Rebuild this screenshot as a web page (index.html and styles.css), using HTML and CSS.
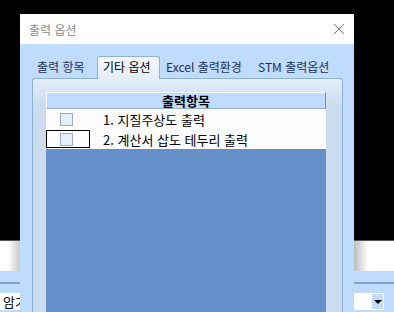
FILE: index.html
```html
<!DOCTYPE html>
<html lang="ko">
<head>
	<meta charset="utf-8">
	<title>출력 옵션</title>
	<link rel="stylesheet" href="styles.css">
</head>
<body>
	<div class="desk">
		<div class="desk-black"></div>
		<div class="desk-strip"></div>
		<div class="desk-band"></div>
		<div class="desk-rule"></div>
		<div class="desk-band2"></div>
		<div class="combo-row">
			<div class="combo combo-left">암기</div>
			<div class="combo combo-right"><span class="combo-btn"><i></i></span></div>
		</div>
	</div>

	<div class="dialog">
		<div class="titlebar">
			<span class="title">출력 옵션</span>
			<svg class="close" width="12" height="12" viewBox="0 0 12 12">
				<path d="M1 1 L11 11 M11 1 L1 11" stroke="#7b7b7b" stroke-width="1" fill="none"/>
			</svg>
		</div>
		<div class="dlg-body">
			<div class="tabs">
				<span class="tab tab1">출력 항목</span>
				<span class="tab tab2 on">기타 옵션</span>
				<span class="tab tab3">Excel 출력환경</span>
				<span class="tab tab4">STM 출력옵션</span>
			</div>
			<div class="panel">
				<div class="grid">
					<div class="grid-head">출력항목</div>
					<div class="grid-row">
						<div class="cell-chk"><span class="chk"></span></div>
						<div class="cell-txt">1. 지질주상도 출력</div>
					</div>
					<div class="grid-row">
						<div class="cell-chk focus"><span class="chk"></span></div>
						<div class="cell-txt">2. 계산서 삽도 테두리 출력</div>
					</div>
					<div class="grid-empty"></div>
				</div>
			</div>
		</div>
	</div>
</body>
</html>
```

FILE: styles.css
```css
*{
	margin: 0;
	padding: 0;
	box-sizing: border-box;
}
body{
	width: 394px;
	height: 312px;
	overflow: hidden;
	background: #000;
	font-family: "Noto Sans CJK KR", "Noto Sans", sans-serif;
	font-size: 12px;
	position: relative;
}
/* 뒤쪽 창 */
.desk{
	display: flex;
	flex-direction: column;
	height: 312px;
}
.desk-black{
	height: 240px;
	background: #000;
}
.desk-strip{
	height: 31px;
	border-top: 1px solid #555;
	background:
		linear-gradient(to right, #fff 0, #fff 8px, #c8c8c8 20px, transparent 20px),
		linear-gradient(to left, #fff 0, #fff 26px, #bdbdbd 40px, transparent 40px);
	background-color: #fff;
}
.desk-band{
	height: 11px;
	background: #bfdbfd;
}
.desk-rule{
	height: 2px;
	background: #7ea4d6;
}
.desk-band2{
	height: 9px;
	background: #bfdbfd;
}
.combo-row{
	flex: 1;
	background: #bfdbfd;
	display: flex;
	justify-content: space-between;
}
.combo{
	height: 17px;
	background: #fff;
}
.combo-left{
	width: 120px;
	padding-left: 3px;
	font-size: 13px;
	line-height: 17px;
	color: #000;
}
.combo-right{
	width: 60px;
	margin-right: 10px;
	display: flex;
	justify-content: flex-end;
}
.combo-btn{
	width: 13px;
	height: 17px;
	border: 1px solid #fff;
	background: #c4dcfa;
	display: flex;
	align-items: center;
	justify-content: center;
}
.combo-btn i{
	width: 0;
	height: 0;
	border-left: 4px solid transparent;
	border-right: 4px solid transparent;
	border-top: 4px solid #000;
}
/* 대화상자 */
.dialog{
	position: absolute;
	left: 20px;
	top: 14px;
	width: 334px;
	height: 310px;
	background: #bfdbfd;
	display: flex;
	flex-direction: column;
}
.titlebar{
	height: 30px;
	background: #fff;
	display: flex;
	align-items: center;
	justify-content: space-between;
	padding: 0 9px 0 9px;
}
.title{
	color: #8e8e8e;
	font-size: 12px;
}
.dlg-body{
	flex: 1;
	padding: 12px 11px 0 12px;
	display: flex;
	flex-direction: column;
}
.tabs{
	height: 22px;
	display: flex;
	align-items: flex-end;
	position: relative;
	z-index: 1;
}
.tab{
	height: 20px;
	line-height: 18px;
	color: #1f3152;
	white-space: nowrap;
}
.tab1{
	width: 65px;
	padding-left: 5px;
}
.tab2{
	width: 63px;
	padding-left: 5px;
}
.tab3{
	width: 92px;
	padding-left: 6px;
}
.tab4{
	padding-left: 6px;
}
.tab.on{
	height: 23px;
	margin-bottom: -1px;
	line-height: 19px;
	color: #000;
	border: 1px solid #8fb0d8;
	border-bottom: none;
	border-radius: 3px 3px 0 0;
	background: linear-gradient(#f4f8fc, #e3edf8);
}
.panel{
	flex: 1;
	border: 1px solid #8fb0d8;
	border-bottom: none;
	border-radius: 3px 3px 0 0;
	background: linear-gradient(#e3edf8, #cbdcee 28px);
	padding: 13px 16px 0 13px;
	display: flex;
	flex-direction: column;
}
.grid{
	flex: 1;
	display: flex;
	flex-direction: column;
	background: #648fc8;
	font-size: 13px;
}
.grid-head{
	height: 17px;
	background: #bfdbfd;
	border-top: 1px solid #fff;
	border-left: 1px solid #fff;
	border-right: 1px solid #6b8cbc;
	border-bottom: 1px solid #98aecb;
	text-align: center;
	font-weight: bold;
	line-height: 15px;
	color: #000;
}
.grid-row{
	height: 20px;
	background: #fdfcff;
	display: flex;
	align-items: center;
}
.cell-chk{
	width: 44px;
	height: 18px;
	padding-left: 13px;
	display: flex;
	align-items: center;
	border: 1px solid transparent;
}
.cell-chk.focus{
	border-color: #000;
}
.chk{
	width: 13px;
	height: 13px;
	border: 1px solid #a3aab8;
	background: #e4eefc;
}
.cell-txt{
	padding-left: 13px;
	color: #000;
	white-space: nowrap;
}
.grid-empty{
	flex: 1;
}
```
